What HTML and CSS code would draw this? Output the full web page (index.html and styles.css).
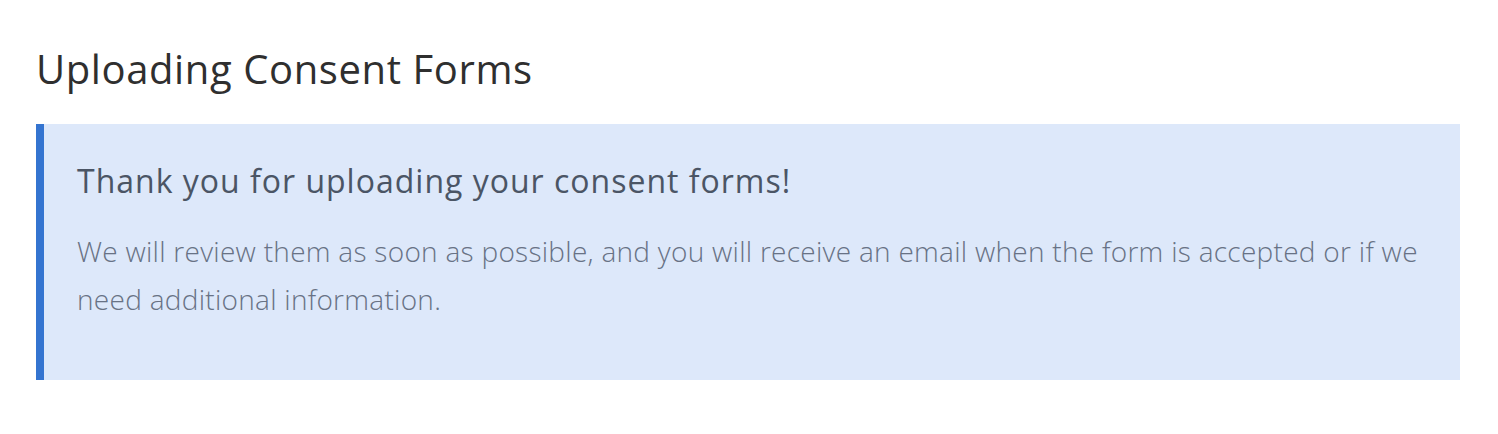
FILE: index.html
```html
<!DOCTYPE html>
<html lang="en">
<head>
<meta charset="utf-8">
<title>Uploading Consent Forms</title>
<link rel="stylesheet" href="styles.css">
</head>
<body>
<main class="page">
  <h1 class="page-title">Uploading Consent Forms</h1>
  <section class="notice">
    <h2 class="notice-title">Thank you for uploading your consent forms!</h2>
    <p class="notice-text">We will review them as soon as possible, and you will receive an email when the form is accepted or if we need additional information.</p>
  </section>
</main>
</body>
</html>
```
FILE: styles.css
```css
html, body {
  margin: 0;
  padding: 0;
  background: #ffffff;
}

.page {
  padding: 42px 38px 0 36px;
}

.page-title {
  margin: 0 0 28px 0;
  font-family: "Open Sans", sans-serif;
  font-weight: 400;
  font-size: 40px;
  line-height: 54px;
  letter-spacing: 0.6px;
  color: #2f2f2f;
}

.notice {
  background: #dde8fa;
  border-left: 8px solid #3474d0;
  padding: 36px 40px 57px 33px;
}

.notice-title {
  margin: 0 0 25px 0;
  font-family: "Open Sans", sans-serif;
  font-weight: 400;
  font-size: 32px;
  line-height: 42px;
  letter-spacing: 1px;
  color: #4b5565;
}

.notice-text {
  margin: 0;
  font-family: "Open Sans", sans-serif;
  font-weight: 300;
  font-size: 28px;
  line-height: 48px;
  letter-spacing: 0.28px;
  color: #687285;
}
```
